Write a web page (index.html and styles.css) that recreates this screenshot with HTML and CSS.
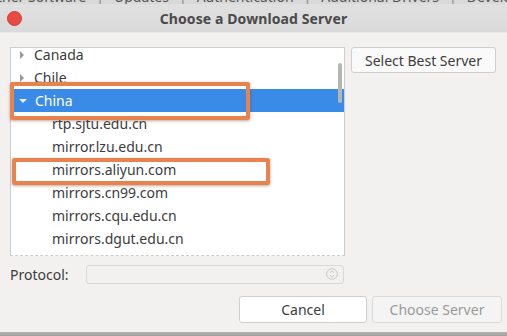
FILE: index.html
```html
<!DOCTYPE html>
<html lang="en">
<head>
    <meta charset="UTF-8">
    <title>Choose a Download Server</title>
    <link rel="stylesheet" href="styles.css">
</head>
<body>
    <div class="behind">
        <div class="tabs">
            <span>Other Software</span><i>|</i><span>Updates</span><i>|</i><span>Authentication</span><i>|</i><span>Additional Drivers</span><i>|</i><span>Developer Options</span>
        </div>
    </div>

    <div class="titlebar">
        <div class="title-left"><span class="close-btn"></span></div>
        <div class="title">Choose a Download Server</div>
        <div></div>
    </div>

    <div class="dialog">
        <div class="top-row">
            <div class="server-list">
                <div class="rows">
                    <div class="row country"><span class="arrow-right"></span>Canada</div>
                    <div class="row country"><span class="arrow-right"></span>Chile</div>
                    <div class="row country selected"><span class="arrow-down"></span>China</div>
                    <div class="row mirror">rtp.sjtu.edu.cn</div>
                    <div class="row mirror">mirror.lzu.edu.cn</div>
                    <div class="row mirror">mirrors.aliyun.com</div>
                    <div class="row mirror">mirrors.cn99.com</div>
                    <div class="row mirror">mirrors.cqu.edu.cn</div>
                    <div class="row mirror">mirrors.dgut.edu.cn</div>
                    <div class="row mirror">mirrors.huaweicloud.com</div>
                </div>
                <div class="scroll-thumb"></div>
            </div>
            <button class="btn best-btn">Select Best Server</button>
        </div>

        <div class="protocol-row">
            <label class="protocol-label">Protocol:</label>
            <div class="combo">
                <svg class="combo-icon" width="12" height="12" viewBox="0 0 12 12">
                    <circle cx="6" cy="6" r="5.3" fill="none" stroke="#c9c9c9" stroke-width="1"/>
                    <path d="M3.8 5 L6 2.8 L8.2 5 M3.8 7 L6 9.2 L8.2 7" fill="none" stroke="#c9c9c9" stroke-width="1"/>
                </svg>
            </div>
        </div>

        <div class="button-row">
            <button class="btn cancel-btn">Cancel</button>
            <button class="btn choose-btn" disabled>Choose Server</button>
        </div>
    </div>

    <div class="bottom-edge"></div>

    <!-- annotation boxes drawn on top of the screenshot -->
    <div class="mark mark-china"></div>
    <div class="mark mark-aliyun"></div>
</body>
</html>
```

FILE: styles.css
```css
* {
    margin: 0;
    padding: 0;
    box-sizing: border-box;
}

body {
    width: 507px;
    height: 336px;
    overflow: hidden;
    position: relative;
    display: flex;
    flex-direction: column;
    background: #f2f1f0;
    font-family: 'Noto Sans', 'DejaVu Sans', sans-serif;
    font-size: 14px;
    color: #3c3c3c;
}

.behind {
    height: 4px;
    overflow: hidden;
    background: #d9d9d9;
}

.tabs {
    display: flex;
    margin-top: -11px;
    margin-left: -14px;
    white-space: nowrap;
    font-size: 14px;
    line-height: 16px;
    color: #555;
}

.tabs i {
    font-style: normal;
    padding: 0 10px;
    color: #888;
}

.titlebar {
    height: 29px;
    display: grid;
    grid-template-columns: 1fr auto 1fr;
    align-items: center;
    background: linear-gradient(#e0e0e0, #dadada);
    border-bottom: 1px solid #ebebeb;
}

.title-left {
    display: flex;
    padding-left: 7px;
}

.close-btn {
    width: 15px;
    height: 15px;
    border-radius: 50%;
    background: #ea4a46;
    border: 1px solid #d23a36;
}

.title {
    font-weight: bold;
    font-size: 14px;
    color: #4a4a4a;
    letter-spacing: 0.1px;
}

.dialog {
    padding: 14px 10px 0 10px;
}

.top-row {
    display: flex;
    align-items: flex-start;
    gap: 6px;
}

.server-list {
    position: relative;
    width: 335px;
    height: 209px;
    background: #fff;
    border: 1px solid #cdcdcd;
    border-bottom-style: dashed;
    overflow: hidden;
}

.rows {
    margin-top: -5px;
}

.row {
    height: 23px;
    display: flex;
    align-items: center;
    white-space: nowrap;
    font-size: 14px;
    color: #3c3c3c;
}

.country {
    padding-left: 8px;
}

.mirror {
    padding-left: 41px;
}

.selected {
    background: #3a8ae8;
    color: #fff;
}

.arrow-right {
    width: 0;
    height: 0;
    margin-right: 10px;
    margin-left: 1px;
    border-top: 4px solid transparent;
    border-bottom: 4px solid transparent;
    border-left: 4px solid #9a9a9a;
}

.arrow-down {
    width: 0;
    height: 0;
    margin-right: 8px;
    border-left: 4px solid transparent;
    border-right: 4px solid transparent;
    border-top: 4px solid #e8f1fc;
}

.scroll-thumb {
    position: absolute;
    top: 15px;
    right: 2px;
    width: 4px;
    height: 40px;
    border-radius: 2px;
    background: #b5b5b5;
}

.btn {
    font-family: inherit;
    font-size: 14px;
    color: #3c3c3c;
    background: #f7f7f7;
    border: 1px solid #cfcfcf;
    border-radius: 3px;
}

.best-btn {
    width: 145px;
    height: 26px;
    background: #fafafa;
}

.protocol-row {
    display: flex;
    align-items: center;
    margin-top: 8px;
    height: 20px;
}

.protocol-label {
    width: 76px;
    font-size: 14px;
    color: #3c3c3c;
}

.combo {
    width: 258px;
    height: 19px;
    display: flex;
    align-items: center;
    justify-content: flex-end;
    padding-right: 5px;
    background: #f2f1f0;
    border: 1px solid #d8d8d8;
    border-radius: 3px;
}

.button-row {
    display: flex;
    justify-content: flex-end;
    gap: 5px;
    margin-top: 12px;
    margin-right: -5px;
}

.cancel-btn {
    width: 128px;
    height: 27px;
    background: #fff;
}

.choose-btn {
    width: 130px;
    height: 27px;
    color: #9a9a9a;
    background: #f4f4f4;
    border-color: #dadada;
}

.bottom-edge {
    margin-top: auto;
    height: 4px;
    background: linear-gradient(#b4b4b4, #9e9e9e);
}

.mark {
    position: absolute;
    border: 4px solid #e9834e;
    border-radius: 2px;
    box-shadow: 0 1px 3px rgba(120, 60, 20, 0.45);
}

.mark-china {
    left: 10px;
    top: 82px;
    width: 240px;
    height: 38px;
}

.mark-aliyun {
    left: 12px;
    top: 158px;
    width: 258px;
    height: 27px;
}
```
